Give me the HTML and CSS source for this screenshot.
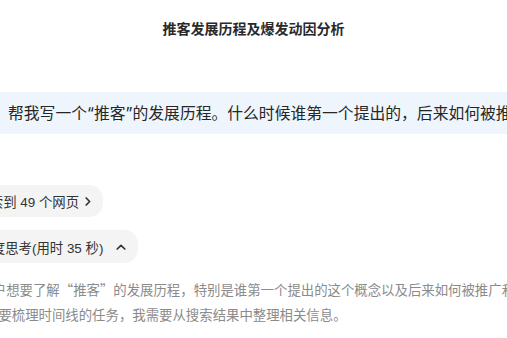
FILE: index.html
```html
<!DOCTYPE html>
<html lang="zh-CN">
<head>
<meta charset="utf-8">
<title>推客发展历程及爆发动因分析</title>
<link rel="stylesheet" href="styles.css">
</head>
<body>
<header class="top">
  <h1 class="title">推客发展历程及爆发动因分析</h1>
</header>
<main class="thread">
  <div class="user-msg">
    <p class="user-text">帮我写一个“推客”的发展历程。什么时候谁第一个提出的，后来如何被推广和爆发的？</p>
  </div>
  <div class="answer">
    <div class="pill pill-search">
      <span class="pill-label">已搜索到 49 个网页</span>
      <svg class="chev" width="6" height="9" viewBox="0 0 6 9"><path d="M1.2 1 L4.6 4.5 L1.2 8" fill="none" stroke="#333" stroke-width="1.7" stroke-linecap="round" stroke-linejoin="round"/></svg>
    </div>
    <div class="pill pill-think">
      <span class="pill-label">已深度思考(用时 35 秒)</span>
      <svg class="chev" width="10" height="6" viewBox="0 0 10 6"><path d="M1.2 5 L5 1.3 L8.8 5" fill="none" stroke="#333" stroke-width="1.7" stroke-linecap="round" stroke-linejoin="round"/></svg>
    </div>
    <div class="thought">
      <p class="thought-text">用户想要了解“推客”的发展历程，特别是谁第一个提出的这个概念以及后来如何被推广和爆发的。这<br>需要梳理时间线的任务，我需要从搜索结果中整理相关信息。</p>
    </div>
  </div>
</main>
</body>
</html>
```
FILE: styles.css
```css
* { box-sizing: border-box; }
html, body {
  margin: 0;
  padding: 0;
  background: #ffffff;
  overflow: hidden;
}
body {
  width: 507px;
  height: 338px;
  font-family: Inter, "Noto Sans CJK SC", sans-serif;
  color: #262626;
}
.top {
  display: flex;
  justify-content: center;
  padding-top: 19px;
  height: 92px;
}
.title {
  margin: 0;
  font-size: 14px;
  line-height: 19px;
  font-weight: 700;
  color: #2a2a2a;
  white-space: nowrap;
}
.thread {
  display: flex;
  flex-direction: column;
}
.user-msg {
  background: #eff5fc;
  padding: 8.5px 0 8.5px 8px;
  white-space: nowrap;
  overflow: hidden;
}
.user-text {
  margin: 0;
  font-size: 15.8px;
  line-height: 25px;
  color: #262626;
}
.answer {
  display: flex;
  flex-direction: column;
  align-items: flex-start;
  margin-left: -47px;
  padding-top: 51px;
}
.pill {
  display: inline-flex;
  align-items: center;
  gap: 6px;
  height: 32px;
  padding: 0 12px 0 10px;
  background: #f4f4f4;
  border-radius: 14px;
  font-family: "Liberation Sans", "Noto Sans CJK SC", sans-serif;
  font-size: 13.4px;
  color: #333;
  white-space: nowrap;
}
.pill-think {
  margin-top: 13px;
  height: 33px;
  gap: 13px;
  padding-left: 12px;
  padding-right: 12px;
}
.chev { display: block; flex: none; }
.thought {
  margin-top: 14px;
  margin-left: 32px;
  white-space: nowrap;
}
.thought-text {
  margin: 0;
  font-family: "Noto Sans CJK SC", sans-serif;
  font-size: 13.4px;
  line-height: 25px;
  text-indent: -5.6px;
  color: #8b8b8b;
}
```
